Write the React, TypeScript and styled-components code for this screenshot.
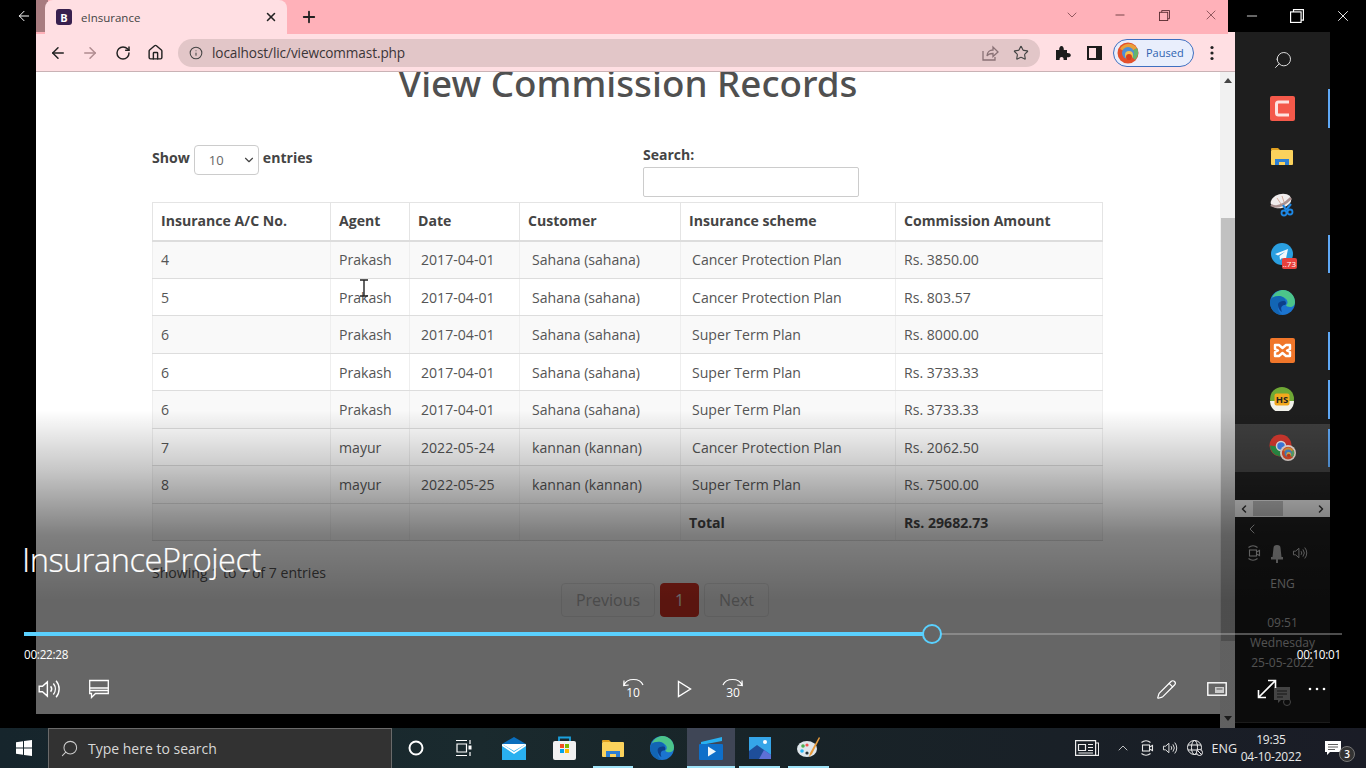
import React from "react";
import styled, { createGlobalStyle } from "styled-components";
import { ArrowLeft, ArrowRight, RotateCw, Home, Info, Star, Plus, X, ChevronDown, ChevronLeft, ChevronRight, ChevronUp, Minus, Search, Pencil } from "lucide-react";

const Global = createGlobalStyle`
  html, body { margin: 0; padding: 0; background: #000; overflow: hidden; }
  * { box-sizing: border-box; }
`;

const Screen = styled.div`
  position: relative; width: 1366px; height: 768px; overflow: hidden; background: #000;
  display: flex; flex-direction: column; font-family: "Open Sans", "Liberation Sans", sans-serif;
`;
const Desktop = styled.div`display: flex; height: 728px;`;
const Gutter = styled.div`width: 36px; color: #fff; display: flex; justify-content: center; padding: 8px 0 0 12px;`;
const Browser = styled.div`width: 1199px; display: flex; flex-direction: column; background: #ffdfe3;`;
const BrowserTop = styled.div`display: flex; height: 34px;`;
const TabStrip = styled.div`flex: 1; background: #ffb1b9; display: flex; align-items: flex-start; color: #222;`;
const TabShade = styled.div`width: 12px; height: 32px; background: #a87c80;`;
const ActiveTab = styled.div`
  margin-left: -3px; width: 242px; height: 34px; background: #ffdfe3; border-radius: 8px 8px 0 0;
  display: flex; align-items: center; padding: 0 9px 0 11px; position: relative; top: 0;
`;
const Favicon = styled.span`
  width: 16px; height: 16px; border-radius: 3px; background: #38204f; color: #fff; font-size: 11px; font-weight: 700;
  display: flex; align-items: center; justify-content: center;
`;
const TabTitle = styled.span`margin-left: 9px; flex: 1; font-size: 11.5px; color: #444; font-family: "Open Sans", sans-serif;`;
const NewTab = styled.div`margin-left: 13px; height: 34px; display: flex; align-items: center;`;
const WinControls = styled.div`
  margin-left: auto; width: 164px; height: 30px; display: flex; align-items: center; justify-content: space-between; padding: 0 9px 0 0; color: #5a2c32;
`;
const CornerGap = styled.div`width: 7px; height: 32px; background: #000;`;
const Toolbar = styled.div`
  height: 38px; display: flex; align-items: center; background: #ffdfe3; border-bottom: 1px solid #c9b2b5; padding: 0 0 0 13px; color: #222;
`;
const NavBtn = styled.span<{ $w: number; $faded?: boolean }>`
  width: ${p => p.$w}px; display: flex; color: ${p => (p.$faded ? "#b08c90" : "#222")};
`;
const AddressBar = styled.div`
  margin-left: 9px; width: 862px; height: 28px; border-radius: 14px; background: #e2c6c8;
  display: flex; align-items: center; padding: 0 11px 0 11px; color: #444; font-size: 13.6px;
`;
const Url = styled.span`margin-left: 9px; flex: 1; color: #3b3537; letter-spacing: -0.1px;`;
const AddrAct = styled.span`display: flex; margin-left: 14px;`;
const ExtBtn = styled.span<{ $ml: number }>`margin-left: ${p => p.$ml}px; display: flex;`;
const ProfilePill = styled.div`
  margin-left: 11px; width: 81px; height: 28px; border-radius: 14px; border: 1.5px solid #3f6fc0; background: #e9eefc;
  display: flex; align-items: center; padding-left: 3px; color: #2f62b0; font-size: 11px;
`;
const PillText = styled.span`margin-left: 7px;`;

const ViewRow = styled.div`flex: 1; display: flex; min-height: 0;`;
const PageCol = styled.div`width: 1184px; display: flex; flex-direction: column; background: #000;`;
const Page = styled.div`height: 642px; background: #fff; overflow: hidden; padding: 0 0 0 116px; color: #555;`;
const Scrollbar = styled.div`width: 15px; background: #f1f1f1; display: flex; flex-direction: column; align-items: center; color: #444; position: relative;`;
const ScrollThumb = styled.div`width: 14px; height: 423px; margin-top: 135px; background: #c1c1c1;`;
const ArrowUpTri = styled.div`
  width: 0; height: 0; margin-top: 6px; border-left: 4px solid transparent; border-right: 4px solid transparent; border-bottom: 5px solid #444;
`;
const ArrowDownTri = styled.div`
  width: 0; height: 0; margin-top: 75px; border-left: 4px solid transparent; border-right: 4px solid transparent; border-top: 5px solid #444;
`;

const Heading = styled.h1`
  margin: -9px 0 42px -116px; width: 1184px; text-align: center; font-size: 36.8px; line-height: 40px; font-weight: 500; color: #505050;
  font-family: "Noto Sans", "Open Sans", sans-serif;
`;
const ControlRow = styled.div`display: grid; grid-template-columns: 491px 216px; height: 52px; margin-bottom: 5px;`;
const ShowGroup = styled.div`display: flex; align-items: flex-start; font-size: 14.1px; font-weight: 700; color: #444; line-height: 26px;`;
const SelectBox = styled.div`
  margin: 0 4px 0 4px; width: 65px; height: 30px; border: 1px solid #ccc; border-radius: 4px; display: flex; align-items: center; justify-content: space-between;
  padding: 0 2px 0 14px; font-weight: 400; font-size: 13px; color: #666; background: #fff;
`;
const SearchGroup = styled.div`display: flex; flex-direction: column; font-size: 14px; font-weight: 700; color: #444;`;
const SearchLabel = styled.label`line-height: 20px; margin-bottom: 2px;`;
const SearchInput = styled.div`height: 30px; border: 1px solid #ccc; border-radius: 2px; background: #fff;`;

const Table = styled.table`
  width: 950px; table-layout: fixed; border-collapse: collapse; font-size: 14.1px; color: #555; border: 1px solid #ddd;
`;
const Th = styled.th`
  height: 38px; padding: 0 8px 2px; text-align: left; font-weight: 700; color: #444; border: 1px solid #e4e4e4; border-bottom: 2px solid #ddd; background: #fff;
`;
const Row = styled.tr<{ $odd?: boolean }>`background: ${p => (p.$odd ? "#f9f9f9" : "#fff")}; height: 37.5px;`;
const Td = styled.td<{ $indent?: number; $bold?: boolean; $top?: boolean }>`
  padding: 0.6px 8px 0 ${p => 8 + (p.$indent || 0)}px; border: 1px solid #ddd; border-left-color: #eee; border-right-color: #eee;
  font-weight: ${p => (p.$bold ? 700 : 400)}; color: ${p => (p.$bold ? "#444" : "#555")};
`;
const Footer = styled.div`margin-top: 22px; font-size: 14.1px; line-height: 20px; color: #555;`;
const Pagination = styled.div`display: flex; gap: 5px; padding-left: 409px;`;
const PageBtn = styled.div<{ $w: number; $active?: boolean }>`
  width: ${p => p.$w}px; height: 34px; border-radius: 4px; display: flex; align-items: center; justify-content: center; font-size: 16px;
  background: ${p => (p.$active ? "#e13425" : "#fff")}; border: 1px solid ${p => (p.$active ? "#e13425" : "#eaeaea")}; color: ${p => (p.$active ? "#fff" : "#b9b9b9")};
`;
const Cursor = styled.svg`position: absolute; left: 359px; top: 279px;`;
const BlackStrip = styled.div`flex: 1; background: #000;`;

const RightCol = styled.div`width: 131px; display: flex; flex-direction: column;`;
const OuterControls = styled.div`
  height: 32px; display: flex; align-items: center; justify-content: space-between; padding: 0 14px 0 9px; color: #fff;
`;
const PaneRow = styled.div`flex: 1; display: flex; min-height: 0;`;
const Pane = styled.div`
  width: 95px; background: #1e1e1e; display: flex; flex-direction: column; color: #ddd; border-bottom: 1px solid #444; height: 691px;
`;
const PaneSearch = styled.div`height: 52px; display: flex; align-items: center; justify-content: center; padding: 4px 0 0 0; color: #ddd;`;
const Tile = styled.div<{ $bar?: boolean; $sel?: boolean }>`
  position: relative; height: 48.5px; display: flex; align-items: center; justify-content: center; padding-right: 1px; background: ${p => (p.$sel ? "#3f3f3f" : "transparent")};
  &::after {
    content: ""; display: ${p => (p.$bar ? "block" : "none")}; position: absolute; right: 0; top: 5px; bottom: 5px; width: 2px; background: #5fa8f5;
  }
`;
const PaneScroll = styled.div`
  margin-top: 28px; height: 17px; background: #e6e6e6; display: flex; align-items: center; justify-content: space-between; color: #333; padding: 0 3px; position: relative;
`;
const PaneThumb = styled.div`position: absolute; left: 18px; top: 1px; width: 30px; height: 15px; background: #b5b5b5;`;
const PaneBack = styled.div`margin: 4px 0 0 9px; height: 16px; display: flex; color: #ddd;`;
const TrayRow = styled.div`margin-top: 8px; height: 16px; display: flex; justify-content: space-between; padding: 0 22px 0 11px; color: #ccc;`;
const PaneText = styled.div<{ $mt: number }>`
  margin-top: ${p => p.$mt}px; line-height: 16px; text-align: center; font-size: 12px; color: #ccc;
`;
const PaneChat = styled.div`margin-top: 16px; display: flex; justify-content: center;`;

const Overlay = styled.div`
  position: absolute; left: 0; right: 0; top: 410px; height: 318px; color: #fff; padding-top: 130px;
  background: linear-gradient(180deg, rgba(0,0,0,0) 0, rgba(0,0,0,.22) 60px, rgba(0,0,0,.5) 125px, rgba(0,0,0,.6) 190px, rgba(0,0,0,.6) 100%);
`;
const VideoTitle = styled.div`
  margin-left: 22px; height: 40px; line-height: 40px; font-size: 32.6px; font-weight: 300; color: #fff; letter-spacing: -0.5px; -webkit-text-stroke: 0.2px #fff;
`;
const Track = styled.div`
  position: relative; margin: 52px 0 0 24px; width: 1318px; height: 4px; display: flex; align-items: center;
`;
const TrackRest = styled.div`position: absolute; left: 0; right: 0; height: 2px; background: rgba(190,190,190,.4);`;
const TrackFill = styled.div`position: absolute; left: 0; height: 4px; background: #5ad1ff;`;
const Thumb = styled.div`
  position: absolute; left: 898px; top: -8px; width: 20px; height: 20px; border-radius: 50%; border: 2px solid #5ad1ff; background: #666;
`;
const TimeRow = styled.div`
  margin: 10px 25px 0 24px; height: 16px; display: flex; justify-content: space-between; font-size: 11.7px; line-height: 16px; color: #fff; font-family: "Open Sans", sans-serif;
  letter-spacing: -0.25px;
`;
const ButtonRow = styled.div`margin-top: 12px; height: 30px; display: grid; grid-template-columns: 621px 124px 1fr; align-items: center;`;
const BtnGroup = styled.div<{ $gap: number; $pl?: number; $right?: boolean }>`
  display: flex; align-items: center; gap: ${p => p.$gap}px; padding-left: ${p => p.$pl || 0}px;
  ${p => (p.$right ? "justify-content: flex-end; padding-right: 39px;" : "")}
`;

const Taskbar = styled.div`
  height: 40px; background: linear-gradient(90deg, #16252c 0%, #1a2a2e 35%, #182428 55%, #1a1c26 100%); display: flex; align-items: center; color: #fff; position: relative;
`;
const StartBtn = styled.div`width: 48px; display: flex; justify-content: center;`;
const SearchBox = styled.div`
  width: 344px; height: 40px; background: #323232; border: 1px solid #6a6a6a; border-bottom: none; display: flex; align-items: center; padding-left: 11px; color: #ccc;
`;
const SearchText = styled.span`margin-left: 9px; font-size: 14px; color: #d8d8d8;`;
const TaskCell = styled.div<{ $w: number; $active?: boolean; $under?: boolean }>`
  position: relative; width: ${p => p.$w}px; height: 40px; display: flex; align-items: center; justify-content: center;
  background: ${p => (p.$active ? "#3f4656" : "transparent")};
  &::after {
    content: ""; display: ${p => (p.$under ? "block" : "none")}; position: absolute; bottom: 0; left: ${p => (p.$active ? 0 : 4)}px; right: ${p => (p.$active ? 0 : 4)}px; height: 2px; background: #9fe3f8;
  }
`;
const Tray = styled.div`margin-left: auto; display: flex; align-items: center; color: #eee; height: 40px;`;
const TrayItem = styled.div<{ $ml: number }>`margin-left: ${p => p.$ml}px; display: flex; align-items: center; font-size: 12.5px; color: #e8e8e8;`;
const Clock = styled.div`margin-left: 1px; width: 66px; text-align: center; font-size: 12px; line-height: 17px; color: #e8e8e8; letter-spacing: -0.2px;`;
const NotifyWrap = styled.div`position: relative; margin: 0 19px 0 21px; display: flex; width: 22px;`;
const NotifyBadge = styled.span`
  position: absolute; right: -8px; top: 5px; width: 16px; height: 16px; border-radius: 50%; background: #333; border: 1px solid #777;
  font-size: 10px; font-weight: 600; color: #fff; display: flex; align-items: center; justify-content: center;
`;
const BadgeWrap = styled.div`position: relative; display: flex;`;
const Tg73 = styled.span`
  position: absolute; right: -4px; bottom: -4px; background: #e8413c; color: #fff; font-size: 8px; line-height: 11px; border-radius: 2px; padding: 0 1px; white-space: nowrap;
`;

/* drawings */
const ShareIco = () => (
  <svg width="18" height="18" viewBox="0 0 18 18" fill="none" stroke="#8a7276" strokeWidth="1.3">
    <path d="M2 7v9h12v-3M6 12c0-4 3-6 6-6V3l5 5-5 4.5V9.5c-3 0-5 .5-6 2.5z" />
  </svg>
);
const PuzzleIco = () => (
  <svg width="16" height="16" viewBox="0 0 16 16" fill="#1c1c1c">
    <path d="M1 5h3.2C4 2.8 5 1 6.5 1S9 2.8 8.8 5H12v3c2-.3 3.8.6 3.8 2.2S14 12.6 12 12.3V15H8.6c.3-1.8-.6-3-2-3s-2.3 1.2-2 3H1z" />
  </svg>
);
const SidePanelIco = () => (
  <svg width="15" height="14" viewBox="0 0 15 14"><rect x="1" y="1" width="13" height="12" fill="none" stroke="#1c1c1c" strokeWidth="2" /><rect x="9" y="1" width="5" height="12" fill="#1c1c1c" /></svg>
);
const RestoreIco = ({ size = 12, c = "currentColor" }: { size?: number; c?: string }) => (
  <svg width={size} height={size} viewBox="0 0 12 12" fill="none" stroke={c} strokeWidth="1"><rect x=".5" y="2.500" width="9" height="9" /><path d="M3 2.500V.5h8.500v9h-2" /></svg>
);
const ChromeAvatar = ({ s = 22 }: { s?: number }) => (
  <svg width={s} height={s} viewBox="0 0 22 22">
    <circle cx="11" cy="11" r="10.500" fill="#e4502c" />
    <path d="M3 7a10 10 0 0 1 17-1l-5 3a5 5 0 0 0-8 0z" fill="#e8a03a" />
    <path d="M20 6a10 10 0 0 1-2 12l-4-4a5 5 0 0 0 1-5z" fill="#63b56e" />
    <circle cx="11" cy="11" r="6" fill="#4d8fd8" />
    <circle cx="12" cy="13" r="4" fill="#f3c04e" />
    <circle cx="12" cy="15" r="3" fill="#d8401f" />
  </svg>
);
const Camtasia = () => (
  <svg width="25" height="25" viewBox="0 0 25 25"><rect width="25" height="25" rx="2" fill="#f4594a" /><path d="M19 6H8.500a2 2 0 0 0-2 2v9a2 2 0 0 0 2 2H19" fill="none" stroke="#fde4e0" strokeWidth="3" /></svg>
);
const Folder = () => (
  <svg width="22" height="19" viewBox="0 0 22 19">
    <path d="M0 2a1 1 0 0 1 1-1h6l2 2h-9z" fill="#e0a020" />
    <rect y="3" width="22" height="15" rx="1" fill="#fbd25c" />
    <path d="M4 18v-6h14v6h-4v-3H8v3z" fill="#2d7fd3" />
  </svg>
);
const Snip = () => (
  <svg width="24" height="24" viewBox="0 0 24 24">
    <ellipse cx="11" cy="8" rx="10.500" ry="7" fill="#f0ecec" transform="rotate(-15 11 8)" />
    <path d="M1 12q8 5 20-7" stroke="#a9908f" strokeWidth="2.500" fill="none" />
    <path d="M7 5l4 6M12 3l2 6" stroke="#c98" strokeWidth=".8" />
    <path d="M13 12l3 5M21 11l-5 6" stroke="#1e88e5" strokeWidth="2.200" />
    <circle cx="14" cy="20" r="2.500" fill="none" stroke="#1e88e5" strokeWidth="1.800" />
    <circle cx="20" cy="19" r="2.500" fill="none" stroke="#1e88e5" strokeWidth="1.800" />
  </svg>
);
const Telegram = () => (
  <svg width="22" height="22" viewBox="0 0 22 22"><circle cx="11" cy="11" r="11" fill="#2a9fe0" /><path d="M4 11l13-5-2.500 12-3.500-3-2 2-.5-4 6-4.500-7.500 4z" fill="#f2f7fb" /></svg>
);
const Edge = ({ s = 25 }: { s?: number }) => (
  <svg width={s} height={s} viewBox="0 0 25 25">
    <circle cx="12.500" cy="12.500" r="12.500" fill="#1b74d0" />
    <path d="M2 8C4 2 10 0 13 0c7 0 12 6 12 12 0 3-2 5-5 5-2 0-4-1-4-2 2-1 2-4 0-6-4-4-11-3-14-1z" fill="#4cc48a" />
    <path d="M2 8c3-2 9-3 12 0 2 2 2 5 1 6-3-1-7 0-7 4 0 2 1 5 4 7C5 25 0 19 0 12.500 0 11 1 9 2 8z" fill="#1265b4" />
    <path d="M8 15c0-3 3-4 6-4 3 .5 2 4 1 4-3 0-5 2-3 7-2-1-4-4-4-7z" fill="#0c3f8a" />
  </svg>
);
const Xampp = () => (
  <svg width="25" height="25" viewBox="0 0 25 25"><rect width="25" height="25" rx="2" fill="#f0762a" /><path d="M5 7h4l3.500 3L16 7h4v4l-3 1.500 3 1.500v4h-4l-3.500-3L9 18H5v-4l3-1.500L5 11z" fill="none" stroke="#fff" strokeWidth="2.400" strokeLinejoin="round" /></svg>
);
const Hs = () => (
  <svg width="24" height="24" viewBox="0 0 24 24">
    <circle cx="12" cy="12" r="12" fill="#6fa835" />
    <path d="M0 14h24a12 12 0 0 1-24 0z" fill="#f1f1ea" />
    <rect x="4.500" y="6.500" width="15" height="12" rx="2" fill="#f2a81d" />
    <text x="12" y="16" textAnchor="middle" fontSize="9.500" fontWeight="700" fontFamily="Open Sans, sans-serif" fill="#222">HS</text>
  </svg>
);
const Chrome = () => (
  <svg width="27" height="27" viewBox="0 0 27 27">
    <circle cx="11.500" cy="11.500" r="11" fill="#d93a30" />
    <path d="M1 11.500A11 11 0 0 0 11 22.500l5-9z" fill="#2e9a4c" />
    <circle cx="12" cy="12" r="4.500" fill="#4285f4" stroke="#eee" strokeWidth="1.500" />
    <circle cx="19" cy="19" r="8" fill="#f0e6e0" />
    <g transform="translate(12.500 12.500) scale(.6)"><ChromeAvatar /></g>
  </svg>
);
const Windows = () => (
  <svg width="16" height="16" viewBox="0 0 16 16" fill="#fff"><path d="M0 2.200l7-1v6.300H0zM8 1l8-1v7.500H8zM0 8.500h7v6.300l-7-1zM8 8.500h8V16l-8-1z" /></svg>
);
const TaskView = () => (
  <svg width="18" height="18" viewBox="0 0 18 18" fill="none" stroke="#fff" strokeWidth="1.200">
    <path d="M1 1.500h11M1 16.500h11M2 5h9.500v8H2zM15 1v4M15 13v4" /><rect x="13.500" y="6.500" width="3" height="4" fill="#fff" stroke="none" />
  </svg>
);
const Mail = () => (
  <svg width="24" height="23" viewBox="0 0 24 23">
    <path d="M0 7L12 0l12 7-12 8z" fill="#0a6ebd" /><rect y="7" width="24" height="16" fill="#29b0f0" />
    <path d="M0 7l12 8 12-8v2L12 17 0 9z" fill="#fff" />
    <path d="M0 7h24L12 14z" fill="#fff" />
  </svg>
);
const Store = () => (
  <svg width="23" height="24" viewBox="0 0 23 24">
    <path d="M6 5V1.500h11V5" fill="none" stroke="#1aa0dd" strokeWidth="1.800" />
    <rect y="5" width="23" height="19" rx="2" fill="#f1f1f1" />
    <rect x="7" y="8" width="4" height="4" fill="#f25022" /><rect x="12" y="8" width="4" height="4" fill="#7fba00" />
    <rect x="7" y="13" width="4" height="4" fill="#00a4ef" /><rect x="12" y="13" width="4" height="4" fill="#ffb900" />
  </svg>
);
const Movies = () => (
  <svg width="24" height="23" viewBox="0 0 24 23">
    <path d="M2 5L23 0v4L2 8z" fill="#29b0f0" />
    <rect y="7" width="24" height="16" rx="1" fill="#0f6fc9" />
    <path d="M9 9.500l8 5-8 5z" fill="#eef6fb" />
  </svg>
);
const Photos = () => (
  <svg width="22" height="22" viewBox="0 0 22 22">
    <rect width="22" height="22" fill="#35a5e8" />
    <circle cx="16" cy="5" r="2" fill="#fff" />
    <path d="M0 22V14l8-6 14 10v4z" fill="#1e4e9a" /><path d="M10 22l5-9 7 5v4z" fill="#5d70d6" />
  </svg>
);
const Paint = () => (
  <svg width="24" height="24" viewBox="0 0 24 24">
    <ellipse cx="10" cy="13" rx="10" ry="8" fill="#dfe7ec" />
    <circle cx="6" cy="10" r="1.800" fill="#4caf50" /><circle cx="10" cy="9" r="1.600" fill="#ef5350" /><circle cx="5" cy="15" r="1.800" fill="#29b6f6" /><circle cx="10" cy="17" r="1.600" fill="#263238" />
    <path d="M22 1l1 1-8 16-3 3 1-4z" fill="#e89b3c" />
  </svg>
);
const Speaker = ({ s = 22, c = "currentColor" }: { s?: number; c?: string }) => (
  <svg width={s} height={s} viewBox="0 0 22 22" fill="none" stroke={c} strokeWidth="1.300">
    <path d="M2 8.500h3l4.500-4v13l-4.500-4H2zM12.500 8.500a4 4 0 0 1 0 5M15 6a8 8 0 0 1 0 10M17.500 3.500a11.500 11.500 0 0 1 0 15" />
  </svg>
);
const Caption = () => (
  <svg width="20" height="20" viewBox="0 0 20 20" fill="none" stroke="#fff" strokeWidth="1.300">
    <path d="M.7 1.500h18.600v13H6.500L2.500 18.500v-4H.7z" /><path d="M1 9h18M1 11.500h18" />
  </svg>
);
const Skip = ({ label, flip }: { label: string; flip?: boolean }) => (
  <svg width="24" height="26" viewBox="0 0 24 26" fill="none" stroke="#fff" strokeWidth="1.200">
    <g transform={flip ? "translate(24 -1) scale(-1 1)" : "translate(0 -1)"}>
      <path d="M3 10a10 8 0 0 1 19 0M3 5.500l-.3 5 5-.5" />
    </g>
    <text x="12" y="21" textAnchor="middle" fontSize="12" fontFamily="Open Sans, sans-serif" fill="#fff" stroke="none">{label}</text>
  </svg>
);
const Play = () => (
  <svg width="24" height="24" viewBox="0 0 24 24" fill="none" stroke="#fff" strokeWidth="1.400"><path d="M7.500 4.500v15l12-7.500z" /></svg>
);
const Mini = () => (
  <svg width="20" height="14" viewBox="0 0 20 14" fill="none"><rect x=".8" y=".8" width="18.400" height="12.400" stroke="#fff" strokeWidth="1.400" /><rect x="8" y="5" width="9" height="6" fill="#ccc" /><path d="M9.500 7h6" stroke="#555" /></svg>
);
const Expand = () => (
  <svg width="20" height="20" viewBox="0 0 20 20" fill="none" stroke="#fff" strokeWidth="1.600"><path d="M1.500 18.500L18.500 1.500M11 1.500h7.500V9M1.500 11v7.500H9" /></svg>
);
const Dots = () => (
  <svg width="20" height="20" viewBox="0 0 20 20" fill="#fff"><circle cx="3" cy="10" r="1.300" /><circle cx="10" cy="10" r="1.300" /><circle cx="17" cy="10" r="1.300" /></svg>
);
const Meet = ({ c = "currentColor" }: { c?: string }) => (
  <svg width="16" height="16" viewBox="0 0 16 16" fill="none" stroke={c} strokeWidth="1.100">
    <rect x="3.500" y="5" width="7" height="6" /><path d="M10.500 7l3-1.500v5l-3-1.500M2.500 2.500a7 7 0 0 1 9 0M2.500 13.500a7 7 0 0 0 9 0" />
  </svg>
);
const Mic = () => (
  <svg width="14" height="18" viewBox="0 0 14 18" fill="#bbb"><path d="M3.500 3a3.500 3 0 0 1 7 0l1 9H2.500zM1 12h12v2.500H1zM6 14h2v4H6z" /></svg>
);
const ChatReply = () => (
  <svg width="18" height="20" viewBox="0 0 18 20"><path d="M0 0h16v13H7l-3 3v-3H0z" fill="#aaa" /><path d="M3 4h10M3 7h10M3 10h6" stroke="#333" /><circle cx="13" cy="15" r="3.500" fill="none" stroke="#aaa" /></svg>
);
const News = () => (
  <svg width="24" height="16" viewBox="0 0 24 16" fill="none" stroke="#eee" strokeWidth="1.200">
    <path d="M.6.600h20v14.800H.6zM20.600 3h3v12.400h-3" /><path d="M3.500 4.500h7v6h-7zM13 4.500h5M13 7.500h5M13 10.500h5M3.500 13h14.500" />
  </svg>
);
const Globe = () => (
  <svg width="16" height="16" viewBox="0 0 16 16" fill="none" stroke="#eee" strokeWidth="1">
    <circle cx="7.500" cy="7.500" r="7" /><ellipse cx="7.500" cy="7.500" rx="3" ry="7" /><path d="M1 5h13M1 10h13" />
    <circle cx="12.500" cy="12.500" r="3" fill="#1a1c26" /><path d="M10.500 10.500l4 4" />
  </svg>
);
const Notify = () => (
  <svg width="16" height="15" viewBox="0 0 16 15"><path d="M0 0h16v11H5l-3 3v-3H0z" fill="#fff" /><path d="M3 3.500h10M3 6h10M3 8.500h7" stroke="#333" strokeWidth=".8" /></svg>
);

const rows: [string, string, string, string, string, string][] = [
  ["4", "Prakash", "2017-04-01", "Sahana (sahana)", "Cancer Protection Plan", "Rs. 3850.00"],
  ["5", "Prakash", "2017-04-01", "Sahana (sahana)", "Cancer Protection Plan", "Rs. 803.57"],
  ["6", "Prakash", "2017-04-01", "Sahana (sahana)", "Super Term Plan", "Rs. 8000.00"],
  ["6", "Prakash", "2017-04-01", "Sahana (sahana)", "Super Term Plan", "Rs. 3733.33"],
  ["6", "Prakash", "2017-04-01", "Sahana (sahana)", "Super Term Plan", "Rs. 3733.33"],
  ["7", "mayur", "2022-05-24", "kannan (kannan)", "Cancer Protection Plan", "Rs. 2062.50"],
  ["8", "mayur", "2022-05-25", "kannan (kannan)", "Super Term Plan", "Rs. 7500.00"],
];
const colWidths = [178, 79, 110, 161, 215, 207];
const progress = (908 / 1318) * 100;

export default function App() {
  return (
    <Screen>
      <Global />
      <Desktop>
        <Gutter><ArrowLeft size={16} strokeWidth={1.5} /></Gutter>
        <Browser>
          <BrowserTop>
            <TabStrip>
              <TabShade />
              <ActiveTab>
                <Favicon>B</Favicon>
                <TabTitle>eInsurance</TabTitle>
                <X size={14} strokeWidth={2.6} color="#222" />
              </ActiveTab>
              <NewTab><Plus size={18} strokeWidth={2.4} /></NewTab>
              <WinControls>
                <ChevronDown size={16} strokeWidth={1} />
                <Minus size={14} strokeWidth={1.4} />
                <RestoreIco size={11} />
                <X size={16} strokeWidth={1} />
              </WinControls>
            </TabStrip>
            <CornerGap />
          </BrowserTop>
          <Toolbar>
            <NavBtn $w={32}><ArrowLeft size={18} strokeWidth={2} /></NavBtn>
            <NavBtn $w={34} $faded><ArrowRight size={18} strokeWidth={2} /></NavBtn>
            <NavBtn $w={32}><RotateCw size={16} strokeWidth={2.2} /></NavBtn>
            <NavBtn $w={22}><Home size={17} strokeWidth={2} /></NavBtn>
            <AddressBar>
              <Info size={14} strokeWidth={1.8} />
              <Url>localhost/lic/viewcommast.php</Url>
              <ShareIco />
              <AddrAct><Star size={16} strokeWidth={1.7} /></AddrAct>
            </AddressBar>
            <ExtBtn $ml={15}><PuzzleIco /></ExtBtn>
            <ExtBtn $ml={16}><SidePanelIco /></ExtBtn>
            <ProfilePill>
              <ChromeAvatar />
              <PillText>Paused</PillText>
            </ProfilePill>
            <ExtBtn $ml={10}>
              <svg width="16" height="16" viewBox="0 0 16 16" fill="#222"><circle cx="8" cy="2.500" r="1.600" /><circle cx="8" cy="8" r="1.600" /><circle cx="8" cy="13.500" r="1.600" /></svg>
            </ExtBtn>
          </Toolbar>
          <ViewRow>
            <PageCol>
              <Page>
                <Heading>View Commission Records</Heading>
                <ControlRow>
                  <ShowGroup>
                    Show
                    <SelectBox>10<ChevronDown size={14} strokeWidth={2} color="#444" /></SelectBox>
                    entries
                  </ShowGroup>
                  <SearchGroup>
                    <SearchLabel>Search:</SearchLabel>
                    <SearchInput />
                  </SearchGroup>
                </ControlRow>
                <Table>
                  <colgroup>
                    {colWidths.map((w, i) => <col key={i} style={{ width: w }} />)}
                  </colgroup>
                  <thead>
                    <tr>
                      <Th>Insurance A/C No.</Th><Th>Agent</Th><Th>Date</Th><Th>Customer</Th><Th>Insurance scheme</Th><Th>Commission Amount</Th>
                    </tr>
                  </thead>
                  <tbody>
                    {rows.map((r, i) => (
                      <Row key={i} $odd={i % 2 === 0}>
                        <Td>{r[0]}</Td><Td>{r[1]}</Td><Td $indent={3}>{r[2]}</Td><Td $indent={4}>{r[3]}</Td><Td $indent={3}>{r[4]}</Td><Td>{r[5]}</Td>
                      </Row>
                    ))}
                    <Row $odd>
                      <Td /><Td /><Td /><Td /><Td $bold>Total</Td><Td $bold>Rs. 29682.73</Td>
                    </Row>
                  </tbody>
                </Table>
                <Footer>Showing 1 to 7 of 7 entries</Footer>
                <Pagination>
                  <PageBtn $w={94}>Previous</PageBtn>
                  <PageBtn $w={39} $active>1</PageBtn>
                  <PageBtn $w={65}>Next</PageBtn>
                </Pagination>
              </Page>
              <BlackStrip />
            </PageCol>
            <Scrollbar>
              <ArrowUpTri />
              <ScrollThumb />
              <ArrowDownTri />
            </Scrollbar>
          </ViewRow>
        </Browser>
        <RightCol>
          <OuterControls>
            <Minus size={16} strokeWidth={1.2} />
            <RestoreIco size={14} />
            <X size={18} strokeWidth={1.2} />
          </OuterControls>
          <PaneRow>
            <Pane>
              <PaneSearch><Search size={20} strokeWidth={1.2} style={{ transform: "scaleX(-1)" }} /></PaneSearch>
              <Tile $bar><Camtasia /></Tile>
              <Tile><Folder /></Tile>
              <Tile><Snip /></Tile>
              <Tile $bar><BadgeWrap><Telegram /><Tg73>..73</Tg73></BadgeWrap></Tile>
              <Tile><Edge /></Tile>
              <Tile $bar><Xampp /></Tile>
              <Tile $bar><Hs /></Tile>
              <Tile $bar $sel><Chrome /></Tile>
              <PaneScroll>
                <PaneThumb />
                <ChevronLeft size={12} strokeWidth={3} />
                <ChevronRight size={12} strokeWidth={3} />
              </PaneScroll>
              <PaneBack><ChevronLeft size={16} strokeWidth={1.2} /></PaneBack>
              <TrayRow><Meet /><Mic /><Speaker s={16} /></TrayRow>
              <PaneText $mt={15}>ENG</PaneText>
              <PaneText $mt={23}>09:51</PaneText>
              <PaneText $mt={4}>Wednesday</PaneText>
              <PaneText $mt={4}>25-05-2022</PaneText>
              <PaneChat><ChatReply /></PaneChat>
            </Pane>
          </PaneRow>
        </RightCol>
      </Desktop>
      <Taskbar>
        <StartBtn><Windows /></StartBtn>
        <SearchBox>
          <Search size={19} strokeWidth={1.3} style={{ transform: "scaleX(-1)" }} />
          <SearchText>Type here to search</SearchText>
        </SearchBox>
        <TaskCell $w={48}>
          <svg width="16" height="16" viewBox="0 0 16 16" fill="none" stroke="#fff" strokeWidth="2"><circle cx="8" cy="8" r="6.500" /></svg>
        </TaskCell>
        <TaskCell $w={48}><TaskView /></TaskCell>
        <TaskCell $w={52}><Mail /></TaskCell>
        <TaskCell $w={49}><Store /></TaskCell>
        <TaskCell $w={48} $under><Folder /></TaskCell>
        <TaskCell $w={50}><Edge s={24} /></TaskCell>
        <TaskCell $w={48} $active $under><Movies /></TaskCell>
        <TaskCell $w={49} $under><Photos /></TaskCell>
        <TaskCell $w={49} $under><Paint /></TaskCell>
        <Tray>
          <TrayItem $ml={0}><News /></TrayItem>
          <TrayItem $ml={16}><ChevronUp size={16} strokeWidth={1.2} /></TrayItem>
          <TrayItem $ml={8}><Meet /></TrayItem>
          <TrayItem $ml={7}><Speaker s={16} /></TrayItem>
          <TrayItem $ml={9}><Globe /></TrayItem>
          <TrayItem $ml={9}>ENG</TrayItem>
          <Clock>19:35<br />04-10-2022</Clock>
          <NotifyWrap><Notify /><NotifyBadge>3</NotifyBadge></NotifyWrap>
        </Tray>
      </Taskbar>
      <Cursor width="10" height="18" viewBox="0 0 10 18" fill="none" stroke="#222" strokeWidth="1.400"><path d="M1 1h8M5 1v16M1 17h8" /></Cursor>
      <Overlay>
        <VideoTitle>InsuranceProject</VideoTitle>
        <Track>
          <TrackRest />
          <TrackFill style={{ width: `${progress}%` }} />
          <Thumb />
        </Track>
        <TimeRow><span>00:22:28</span><span>00:10:01</span></TimeRow>
        <ButtonRow>
          <BtnGroup $gap={28} $pl={37}><Speaker s={24} c="#fff" /><Caption /></BtnGroup>
          <BtnGroup $gap={26}><Skip label="10" /><Play /><Skip label="30" flip /></BtnGroup>
          <BtnGroup $gap={30} $right><Pencil size={21} strokeWidth={1.4} /><Mini /><Expand /><Dots /></BtnGroup>
        </ButtonRow>
      </Overlay>
    </Screen>
  );
}
